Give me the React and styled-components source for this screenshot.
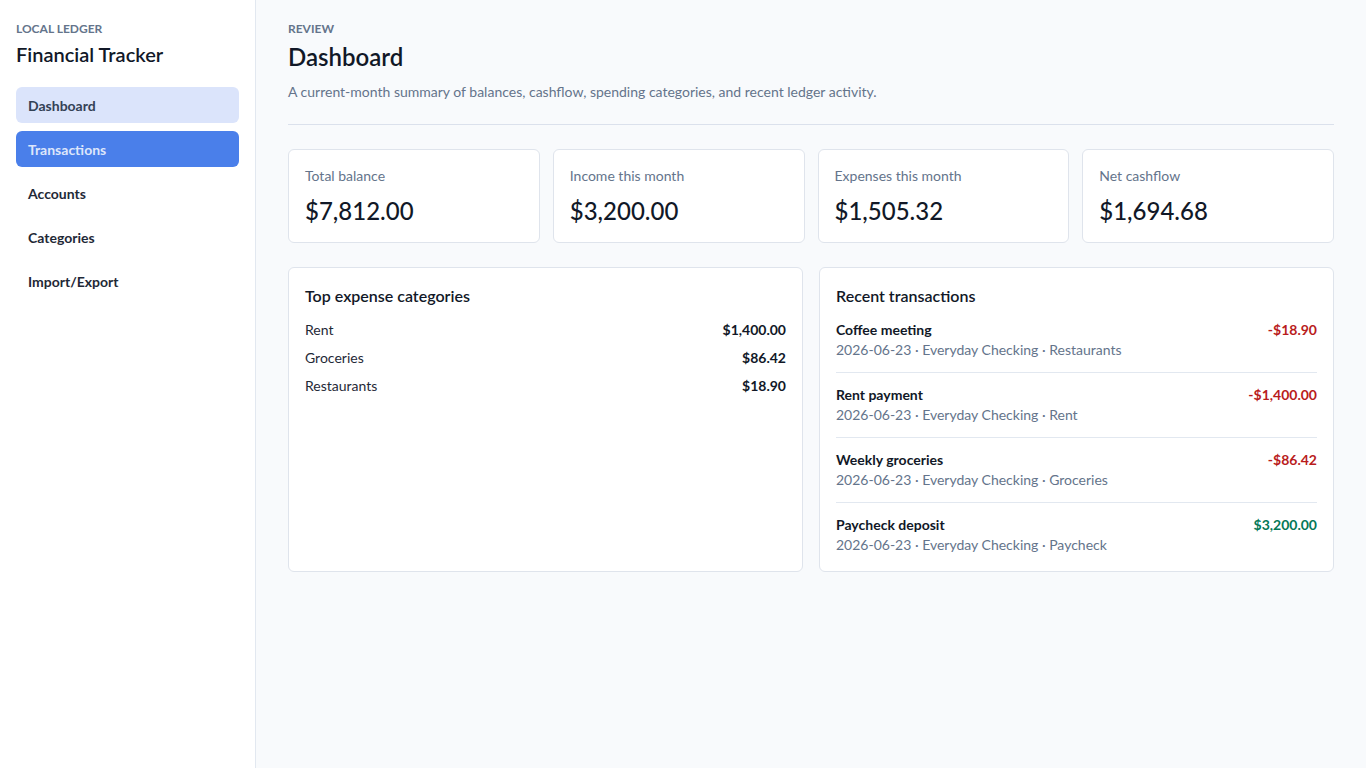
import React from "react";
import styled, { createGlobalStyle } from "styled-components";

const Global = createGlobalStyle`
  * { box-sizing: border-box; }
  html, body { margin: 0; padding: 0; }
  body {
    font-family: Lato, "Noto Sans", sans-serif;
    background: #f8fafc;
    color: #1e293b;
  }
`;

const Shell = styled.div`
  display: flex;
  min-height: 768px;
`;

const Sidebar = styled.aside`
  width: 256px;
  flex-shrink: 0;
  background: #ffffff;
  border-right: 1px solid #e2e8f0;
  padding: 21px 16px;
`;

const Eyebrow = styled.div`
  font-size: 12px;
  line-height: 16px;
  font-weight: 700;
  text-transform: uppercase;
  color: #64748b;
`;

const Brand = styled.h1`
  margin: 3px 0 19px;
  font-size: 20px;
  line-height: 28px;
  font-weight: 600;
  color: #111827;
`;

const Nav = styled.nav`
  display: flex;
  flex-direction: column;
  gap: 8px;
`;

const NavItem = styled.div`
  height: 36px;
  display: flex;
  align-items: center;
  padding: 0 12px;
  border-radius: 6px;
  font-size: 14px;
  font-weight: 700;
  background: ${p => (p.$variant === "soft" ? "#dbe4fb" : p.$variant === "solid" ? "#4a7fea" : "transparent")};
  color: ${p => (p.$variant === "soft" ? "#334155" : p.$variant === "solid" ? "#dde6fb" : "#1f2937")};
`;

const Main = styled.main`
  flex: 1;
  padding: 21px 32px 32px;
`;

const PageTitle = styled.h2`
  margin: 4px 0 0;
  font-size: 24px;
  line-height: 32px;
  font-weight: 600;
  color: #111827;
`;

const Lead = styled.p`
  margin: 9px 0 0;
  font-size: 14px;
  line-height: 20px;
  color: #64748b;
`;

const Divider = styled.hr`
  border: 0;
  border-top: 1px solid #dbe1ec;
  margin: 22px 0 24px;
`;

const StatGrid = styled.div`
  display: grid;
  grid-template-columns: repeat(4, 1fr);
  gap: 13px;
`;

const Card = styled.section`
  background: #ffffff;
  border: 1px solid #dfe4ec;
  border-radius: 6px;
  padding: 16px;
`;

const StatLabel = styled.div`
  font-size: 14px;
  line-height: 20px;
  color: #64748b;
`;

const StatValue = styled.div`
  margin-top: 9px;
  font-size: 24px;
  line-height: 31px;
  font-weight: 500;
  color: #111827;
`;

const PanelGrid = styled.div`
  display: grid;
  grid-template-columns: 1fr 1fr;
  gap: 16px;
  margin-top: 24px;
`;

const PanelTitle = styled.h3`
  margin: 0 0 12px;
  font-size: 16px;
  line-height: 24px;
  font-weight: 600;
  color: #111827;
`;

const CatList = styled.div`
  display: flex;
  flex-direction: column;
  gap: 8px;
`;

const CatRow = styled.div`
  display: flex;
  justify-content: space-between;
  font-size: 14px;
  line-height: 20px;
  color: #1f2937;
`;

const CatAmount = styled.span`
  font-weight: 700;
  color: #111827;
`;

const TxItem = styled.div`
  display: flex;
  justify-content: space-between;
  align-items: flex-start;
  padding: 12px 0;
  border-bottom: 1px solid #e2e8f0;
  &:first-child { padding-top: 0; }
  &:last-child { border-bottom: 0; padding-bottom: 0; }
`;

const TxName = styled.div`
  font-size: 14px;
  line-height: 20px;
  font-weight: 700;
  color: #111827;
`;

const TxMeta = styled.div`
  font-size: 14px;
  line-height: 20px;
  color: #64748b;
`;

const TxAmount = styled.div`
  font-size: 14px;
  line-height: 20px;
  font-weight: 700;
  color: ${p => (p.$positive ? "#047857" : "#b91c1c")};
`;

const stats = [
  ["Total balance", "$7,812.00"],
  ["Income this month", "$3,200.00"],
  ["Expenses this month", "$1,505.32"],
  ["Net cashflow", "$1,694.68"],
];

const cats = [
  ["Rent", "$1,400.00"],
  ["Groceries", "$86.42"],
  ["Restaurants", "$18.90"],
];

const txs = [
  ["Coffee meeting", "Restaurants", "-$18.90", false],
  ["Rent payment", "Rent", "-$1,400.00", false],
  ["Weekly groceries", "Groceries", "-$86.42", false],
  ["Paycheck deposit", "Paycheck", "$3,200.00", true],
];

export default function App() {
  return (
    <>
      <Global />
      <Shell>
        <Sidebar>
          <Eyebrow>Local Ledger</Eyebrow>
          <Brand>Financial Tracker</Brand>
          <Nav>
            <NavItem $variant="soft">Dashboard</NavItem>
            <NavItem $variant="solid">Transactions</NavItem>
            <NavItem>Accounts</NavItem>
            <NavItem>Categories</NavItem>
            <NavItem>Import/Export</NavItem>
          </Nav>
        </Sidebar>
        <Main>
          <Eyebrow>Review</Eyebrow>
          <PageTitle>Dashboard</PageTitle>
          <Lead>A current-month summary of balances, cashflow, spending categories, and recent ledger activity.</Lead>
          <Divider />
          <StatGrid>
            {stats.map(([l, v]) => (
              <Card key={l}>
                <StatLabel>{l}</StatLabel>
                <StatValue>{v}</StatValue>
              </Card>
            ))}
          </StatGrid>
          <PanelGrid>
            <Card>
              <PanelTitle>Top expense categories</PanelTitle>
              <CatList>
                {cats.map(([n, a]) => (
                  <CatRow key={n}>
                    <span>{n}</span>
                    <CatAmount>{a}</CatAmount>
                  </CatRow>
                ))}
              </CatList>
            </Card>
            <Card>
              <PanelTitle>Recent transactions</PanelTitle>
              <div>
                {txs.map(([n, c, a, pos]) => (
                  <TxItem key={n}>
                    <div>
                      <TxName>{n}</TxName>
                      <TxMeta>2026-06-23 · Everyday Checking · {c}</TxMeta>
                    </div>
                    <TxAmount $positive={pos}>{a}</TxAmount>
                  </TxItem>
                ))}
              </div>
            </Card>
          </PanelGrid>
        </Main>
      </Shell>
    </>
  );
}
